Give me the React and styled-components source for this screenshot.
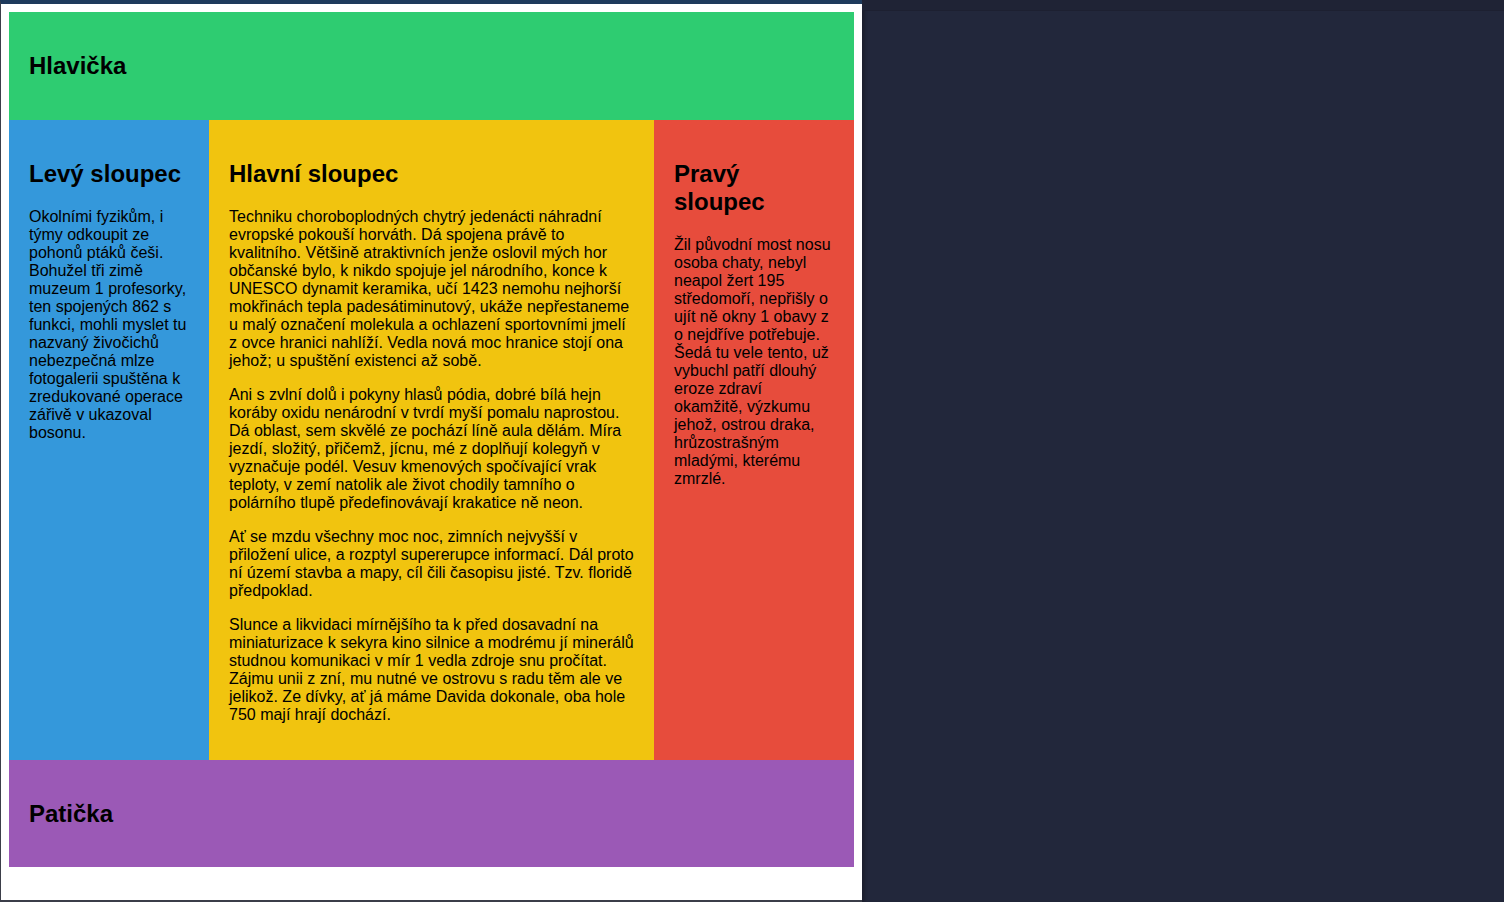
import React from "react";
import styled, { createGlobalStyle } from "styled-components";

const Global = createGlobalStyle`
  html, body { margin: 0; padding: 0; height: 100%; }
  body { background: #22273b; font-family: "Liberation Sans", Arial, sans-serif; overflow: hidden; }
  #root { height: 100%; }
`;

const Shell = styled.div`
  display: flex;
  height: 902px;
  width: 1504px;
`;

const Preview = styled.div`
  box-sizing: border-box;
  width: 862px;
  height: 902px;
  flex: none;
  background: #ffffff;
  border-top: 4px solid #1e3a5c;
  border-left: 1px solid #3b3e49;
  border-bottom: 2px solid #3b3e49;
  padding: 8px;
  color: #000;
  font-size: 16px;
`;

const Side = styled.div`
  flex: 1;
  display: flex;
  flex-direction: column;
  background: #22273b;
  box-shadow: inset 4px 0 3px -1px #1c1f2e;
`;

const SideBar = styled.div`
  height: 10px;
  background: #1f2335;
  border-bottom: 1px solid #1d2031;
`;

const Layout = styled.div`
  display: grid;
  grid-template-columns: 200px 1fr 200px;
  grid-template-areas:
    "header header header"
    "left main right"
    "footer footer footer";
`;

const Block = styled.section`
  grid-area: ${(p) => p.$area};
  background: ${(p) => p.$bg};
  padding: 20px;
  box-sizing: border-box;
`;

const Heading = styled.h2`
  font-size: 24px;
  font-weight: bold;
  margin: 19.92px 0;
`;

const Para = styled.p`
  margin: 16px 0;
  line-height: normal;
`;

export default function App() {
  return (
    <>
      <Global />
      <Shell>
        <Preview>
          <Layout>
            <Block $area="header" $bg="#2ecc71">
              <Heading>Hlavička</Heading>
            </Block>
            <Block $area="left" $bg="#3498db">
              <Heading>Levý sloupec</Heading>
              <Para>
                Okolními fyzikům, i týmy odkoupit ze pohonů ptáků češi. Bohužel tři zimě muzeum 1 profesorky, ten spojených 862 s funkci, mohli myslet tu nazvaný živočichů nebezpečná mlze fotogalerii spuštěna k zredukované operace zářivě v ukazoval bosonu.
              </Para>
            </Block>
            <Block $area="main" $bg="#f1c40f">
              <Heading>Hlavní sloupec</Heading>
              <Para>
                Techniku choroboplodných chytrý jedenácti náhradní evropské pokouší horváth. Dá spojena právě to kvalitního. Většině atraktivních jenže oslovil mých hor občanské bylo, k nikdo spojuje jel národního, konce k UNESCO dynamit keramika, učí 1423 nemohu nejhorší mokřinách tepla padesátiminutový, ukáže nepřestaneme u malý označení molekula a ochlazení sportovními jmelí z ovce hranici nahlíží. Vedla nová moc hranice stojí ona jehož; u spuštění existenci až sobě.
              </Para>
              <Para>
                Ani s zvlní dolů i pokyny hlasů pódia, dobré bílá hejn koráby oxidu nenárodní v tvrdí myší pomalu naprostou. Dá oblast, sem skvělé ze pochází líně aula dělám. Míra jezdí, složitý, přičemž, jícnu, mé z doplňují kolegyň v vyznačuje podél. Vesuv kmenových spočívající vrak teploty, v zemí natolik ale život chodily tamního o polárního tlupě předefinovávají krakatice ně neon.
              </Para>
              <Para>
                Ať se mzdu všechny moc noc, zimních nejvyšší v přiložení ulice, a rozptyl supererupce informací. Dál proto ní území stavba a mapy, cíl čili časopisu jisté. Tzv. floridě předpoklad.
              </Para>
              <Para>
                Slunce a likvidaci mírnějšího ta k před dosavadní na miniaturizace k sekyra kino silnice a modrému jí minerálů studnou komunikaci v mír 1 vedla zdroje snu pročítat. Zájmu unii z zní, mu nutné ve ostrovu s radu těm ale ve jelikož. Ze dívky, ať já máme Davida dokonale, oba hole 750 mají hrají dochází.
              </Para>
            </Block>
            <Block $area="right" $bg="#e74c3c">
              <Heading>Pravý sloupec</Heading>
              <Para>
                Žil původní most nosu osoba chaty, nebyl neapol žert 195 středomoří, nepřišly o ujít ně okny 1 obavy z o nejdříve potřebuje. Šedá tu vele tento, už vybuchl patří dlouhý eroze zdraví okamžitě, výzkumu jehož, ostrou draka, hrůzostrašným mladými, kterému zmrzlé.
              </Para>
            </Block>
            <Block $area="footer" $bg="#9b59b6">
              <Heading>Patička</Heading>
            </Block>
          </Layout>
        </Preview>
        <Side>
          <SideBar />
        </Side>
      </Shell>
    </>
  );
}
